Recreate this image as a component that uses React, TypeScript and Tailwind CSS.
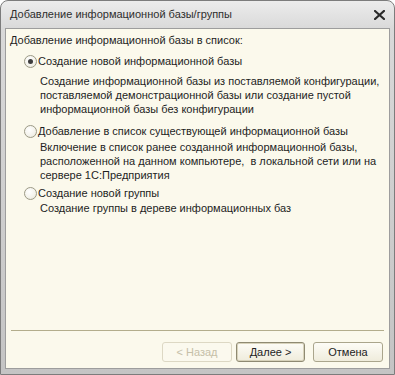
import React from "react";

function Radio({ checked }: { checked?: boolean }) {
  return (
    <span className="relative inline-flex h-[13px] w-[13px] shrink-0 items-center justify-center rounded-full border border-[#9c9a86] bg-[radial-gradient(circle_at_40%_35%,#ffffff,#f3f2ea_60%,#e3e1d4)]">
      {checked && <span className="h-[5px] w-[5px] rounded-full bg-[#3d3d3d]" />}
    </span>
  );
}

function Btn({
  children,
  disabled,
  def,
  className,
}: {
  children: React.ReactNode;
  disabled?: boolean;
  def?: boolean;
  className?: string;
}) {
  return (
    <div
      className={
        "flex h-[20px] items-center justify-center rounded-[3px] border text-[11px] " +
        (disabled
          ? "border-[#ddd8c4] bg-[#fbf9ee] text-[#c6c0a8] "
          : def
          ? "border-[#8f8a72] bg-[linear-gradient(#fdfcf6,#efecdc)] text-[#222] shadow-[inset_0_0_0_1px_#d8d3bb] "
          : "border-[#aaa58c] bg-[linear-gradient(#fdfcf6,#efecdc)] text-[#222] ") +
        (className ?? "")
      }
    >
      {children}
    </div>
  );
}

export default function App() {
  return (
    <div className="h-[375px] w-[395px] bg-white font-['Liberation_Sans',Arial,sans-serif]">
      <div className="flex h-full w-full flex-col rounded-t-[8px] border border-[#7c7c7c] bg-[linear-gradient(#ececec,#d9d9d9_28px,#cdcdcd_60%,#c4c4c4)]">
        <div className="flex h-[27px] shrink-0 items-center justify-between pl-[9px] pr-[8px]">
          <span className="text-[11px] text-[#2e2e2e]">Добавление информационной базы/группы</span>
          <svg width="11" height="10" viewBox="0 0 11 10" className="mr-[1px]">
            <path d="M1 1 L10 9 M10 1 L1 9" stroke="#2a2a2a" strokeWidth="2.2" strokeLinecap="square" />
          </svg>
        </div>
        <div className="mx-[4px] mb-[5px] flex flex-1 flex-col border border-[#9d9d9d] bg-[#fbf9ec] text-[11px] leading-[14px] text-[#1e1e1e]">
          <div className="pl-[4px] pt-[4px]">Добавление информационной базы в список:</div>

          <div className="mt-[7px] flex items-center pl-[18px]">
            <Radio checked />
            <span className="ml-[1px]">Создание новой информационной базы</span>
          </div>
          <div className="mt-[6px] pl-[34px] pr-[8px]">
            Создание информационной базы из поставляемой конфигурации,
            <br />
            поставляемой демонстрационной базы или создание пустой
            <br />
            информационной базы без конфигурации
          </div>

          <div className="mt-[8px] flex items-center pl-[18px]">
            <Radio />
            <span className="ml-[1px]">Добавление в список существующей информационной базы</span>
          </div>
          <div className="mt-[2px] pl-[34px] pr-[8px]">
            Включение в список ранее созданной информационной базы,
            <br />
            расположенной на данном компьютере,&nbsp; в локальной сети или на
            <br />
            сервере 1С:Предприятия
          </div>

          <div className="mt-[4px] flex items-center pl-[18px]">
            <Radio />
            <span className="ml-[1px]">Создание новой группы</span>
          </div>
          <div className="mt-[1px] pl-[34px]">Создание группы в дереве информационных баз</div>

          <div className="flex-1" />
          <div className="mx-[5px] h-[1px] bg-[#b3ad8c]" />
          <div className="mb-[6px] mt-[11px] flex justify-end pr-[6px]">
            <Btn disabled className="w-[70px]">
              &lt; Назад
            </Btn>
            <Btn def className="ml-[4px] w-[69px]">
              Далее &gt;
            </Btn>
            <Btn className="ml-[8px] w-[70px]">Отмена</Btn>
          </div>
        </div>
      </div>
    </div>
  );
}
